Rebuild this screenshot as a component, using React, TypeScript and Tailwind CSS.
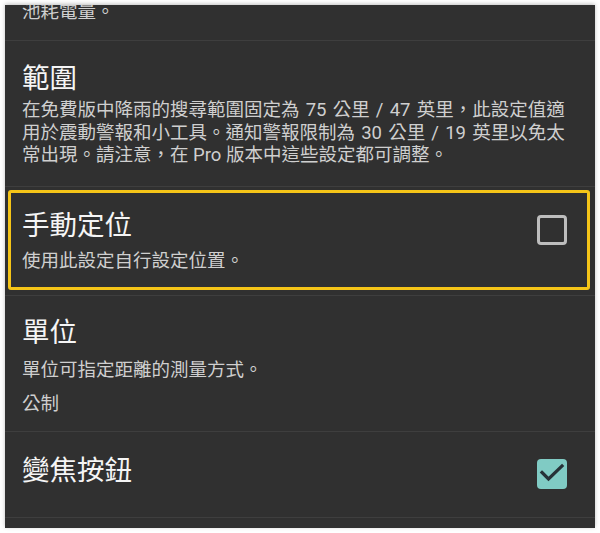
import React from "react"

const font = { fontFamily: '"Roboto", "Noto Sans CJK TC", "Noto Sans CJK JP", sans-serif' }

const Checkbox = ({ checked }: { checked: boolean }) => {
    if (checked) {
        return (
            <div className="w-[30px] h-[30px] rounded-[4px] bg-[#80cbc4] flex items-center justify-center">
                <svg width="30" height="30" viewBox="0 0 30 30">
                    <path d="M5 13.5 L11.5 20 L25 7" fill="none" stroke="#263238" strokeWidth="3.2" strokeLinecap="square" />
                </svg>
            </div>
        )
    }
    return <div className="w-[30px] h-[30px] rounded-[4px] border-[3px] border-[#bdbdbd]" />
}

export default function App() {
    return (
        <div className="w-[600px] h-[533px] bg-white pt-[5px] px-[5px]" style={font}>
            <div className="h-[523px] bg-[#303030] overflow-hidden flex flex-col shadow-[0_-1px_4px_rgba(0,0,0,0.25)]">
                {/* previous row, scrolled off */}
                <div className="h-[35px] shrink-0 pl-[17px]">
                    <p className="-mt-[4px] text-[18.5px] leading-[22.5px] text-[#cfcfcf]">池耗電量。</p>
                </div>

                {/* 範圍 */}
                <div className="h-[146px] shrink-0 border-t border-[#3e3e3e] pl-[17px] pr-[28px] pt-[21px]">
                    <p className="text-[27.5px] leading-[34px] text-[#f5f5f5]">範圍</p>
                    <p className="mt-[3px] text-[18.5px] leading-[22.5px] text-[#cfcfcf] whitespace-nowrap">
                        <span className="[word-spacing:1.6px]">在免費版中降雨的搜尋範圍固定為 75 公里 / 47 英里，此設定值適</span><br />
                        <span className="[word-spacing:1.6px]">用於震動警報和小工具。通知警報限制為 30 公里 / 19 英里以免太</span><br />
                        常出現。請注意，在 Pro 版本中這些設定都可調整。
                    </p>
                </div>

                {/* 手動定位 */}
                <div className="relative h-[109px] shrink-0 border-t border-[#3e3e3e] pl-[17px] pr-[28px] pt-[22px] flex items-start justify-between">
                    <div>
                        <p className="text-[27.5px] leading-[34px] text-[#f5f5f5]">手動定位</p>
                        <p className="mt-[7px] text-[18.5px] leading-[22.5px] text-[#cfcfcf]">使用此設定自行設定位置。</p>
                    </div>
                    <div className="mt-[6px]">
                        <Checkbox checked={false} />
                    </div>
                    <div className="absolute top-[3px] left-[3px] right-[5px] bottom-[5px] border-[3px] border-[#f5c518] rounded-[3px]" />
                </div>

                {/* 單位 */}
                <div className="h-[136px] shrink-0 border-t border-[#3e3e3e] pl-[17px] pr-[28px] pt-[20px]">
                    <p className="text-[27.5px] leading-[34px] text-[#f5f5f5]">單位</p>
                    <p className="mt-[9px] text-[18.5px] leading-[22.5px] text-[#cfcfcf]">單位可指定距離的測量方式。</p>
                    <p className="mt-[11px] text-[18.5px] leading-[22.5px] text-[#cfcfcf]">公制</p>
                </div>

                {/* 變焦按鈕 */}
                <div className="h-[86px] shrink-0 border-t border-[#3e3e3e] pl-[17px] pr-[28px] pt-[22px] flex items-start justify-between">
                    <p className="text-[27.5px] leading-[34px] text-[#f5f5f5]">變焦按鈕</p>
                    <div className="mt-[5px]">
                        <Checkbox checked={true} />
                    </div>
                </div>

                <div className="flex-1 border-t border-[#3e3e3e]" />
            </div>
        </div>
    )
}
